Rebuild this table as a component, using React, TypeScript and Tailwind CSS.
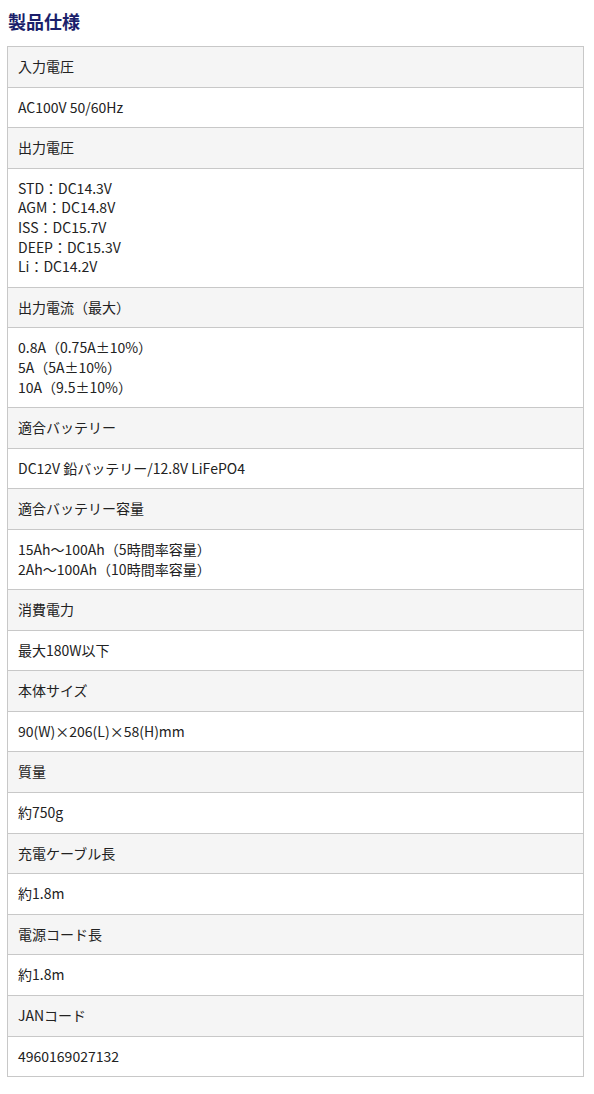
import React from "react";

const rows: [string, string[]][] = [
  ["入力電圧", ["AC100V 50/60Hz"]],
  ["出力電圧", ["STD：DC14.3V", "AGM：DC14.8V", "ISS：DC15.7V", "DEEP：DC15.3V", "Li：DC14.2V"]],
  ["出力電流（最大）", ["0.8A（0.75A±10%）", "5A（5A±10%）", "10A（9.5±10%）"]],
  ["適合バッテリー", ["DC12V 鉛バッテリー/12.8V LiFePO4"]],
  ["適合バッテリー容量", ["15Ah～100Ah（5時間率容量）", "2Ah～100Ah（10時間率容量）"]],
  ["消費電力", ["最大180W以下"]],
  ["本体サイズ", ["90(W)×206(L)×58(H)mm"]],
  ["質量", ["約750g"]],
  ["充電ケーブル長", ["約1.8m"]],
  ["電源コード長", ["約1.8m"]],
  ["JANコード", ["4960169027132"]],
];

export default function App() {
  return (
    <div
      className="bg-white min-h-[1094px] text-[#222]"
      style={{ fontFamily: '"Noto Sans CJK JP", "Noto Sans", sans-serif' }}
    >
      <h2 className="pt-2 pl-[8px] text-[18px] leading-[27px] font-bold text-[#1b1f6b] mb-[11px]">
        製品仕様
      </h2>
      <table className="ml-[7px] w-[577px] border-collapse text-[14px] leading-[19.6px]">
        <tbody>
          {rows.map(([h, v]) => (
            <React.Fragment key={h}>
              <tr>
                <th className="bg-[#f5f5f5] border border-[#c8c8c8] px-[10px] py-[10px] text-left font-normal">
                  {h}
                </th>
              </tr>
              <tr>
                <td className="bg-white border border-[#c8c8c8] px-[10px] py-[10px]">
                  {v.map((l, i) => (
                    <div key={i}>{l}</div>
                  ))}
                </td>
              </tr>
            </React.Fragment>
          ))}
        </tbody>
      </table>
    </div>
  );
}
